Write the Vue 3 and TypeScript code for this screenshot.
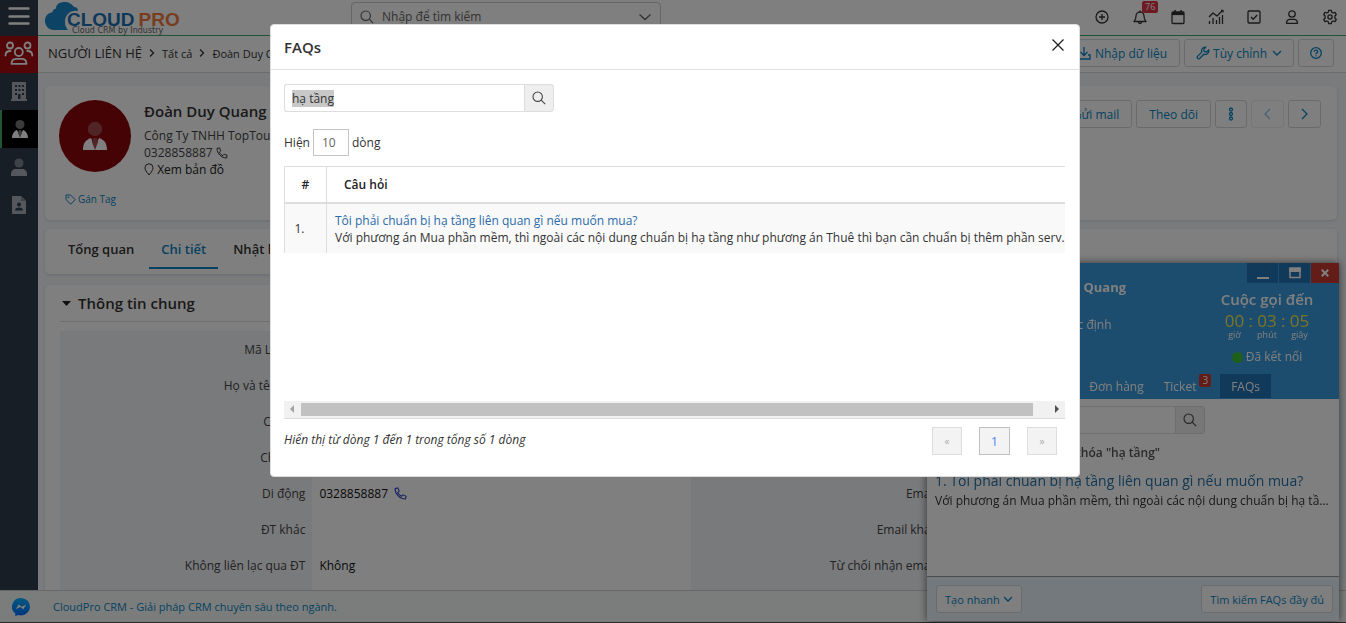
<script setup lang="ts">
import { onMounted, ref } from 'vue'

interface FieldRow {
  left: string
  value: string
  phone?: boolean
  right: string
}

const keyword = ref('hạ tầng')
const keywordInput = ref<HTMLInputElement | null>(null)
const pageSize = ref('10')
const callKeyword = ref('hạ tầng')
const globalSearch = ref('')

onMounted(() => {
  keywordInput.value?.focus()
  keywordInput.value?.select()
})

const rows: FieldRow[] = [
  { left: 'Mã Liên hệ', value: '', right: 'Danh xưng' },
  { left: 'Họ và tên đệm', value: '', right: 'Tên' },
  { left: 'Công ty', value: '', right: 'Phòng ban' },
  { left: 'Chức vụ', value: '', right: 'Điện thoại' },
  { left: 'Di động', value: '0328858887', phone: true, right: 'Email' },
  { left: 'ĐT khác', value: '', right: 'Email khác' },
  { left: 'Không liên lạc qua ĐT', value: 'Không', right: 'Từ chối nhận email' },
  { left: '', value: '', right: '' },
]

const faq = {
  question: 'Tôi phải chuẩn bị hạ tầng liên quan gì nếu muốn mua?',
  answer:
    'Với phương án Mua phần mềm, thì ngoài các nội dung chuẩn bị hạ tầng như phương án Thuê thì bạn cần chuẩn bị thêm phần serv...',
}

const timer = [
  { value: '00', unit: 'giờ' },
  { value: '03', unit: 'phút' },
  { value: '05', unit: 'giây' },
]
</script>

<template>
  <div class="app">
    <header class="topbar">
      <button class="burger" aria-label="Menu">
        <svg width="22" height="18" viewBox="0 0 22 18"><path d="M1.5 1.5h19M1.5 9.5h19M1.5 16.5h19" stroke="#fff" stroke-width="2.4" stroke-linecap="round" /></svg>
      </button>
      <a href="#" class="logo" aria-label="CloudPro">
        <svg width="138" height="34" viewBox="0 0 138 34">
          <path d="M9 29C3 29 0 24 0 20c0-5 3-8 7-8.500C8 9 9 8 11 7.500 11 3 15 1 20 1c4 0 7 2 9 5 3 0 4 2 4 4-8-1-13 4-13 11 0 3 1 6 3 8z" fill="#1a86c8" />
          <text x="27" y="32" class="logo-sub">Cloud CRM by Industry</text>
          <text x="22" y="25" class="logo-text" fill="#1d70b4">CLOUD<tspan fill="#f07a3c" dx="4">PRO</tspan></text>
        </svg>
      </a>
      <label class="global-search">
        <svg width="14" height="14" viewBox="0 0 14 14" fill="none" stroke="#666" stroke-width="1.200"><circle cx="5.700" cy="5.700" r="4.700" /><path d="M9.200 9.200l4 4" /></svg>
        <input v-model="globalSearch" placeholder="Nhập để tìm kiếm" aria-label="Nhập để tìm kiếm" />
        <svg width="14" height="8" viewBox="0 0 14 8" fill="none" stroke="#666" stroke-width="1.300"><path d="M1.500 1.500L7 6.500l5.500-5" /></svg>
      </label>
      <nav class="top-icons">
        <button aria-label="Tạo mới"><svg viewBox="0 0 16 16"><circle cx="8" cy="8" r="6" /><path d="M8 5v6M5 8h6" /></svg></button>
        <button aria-label="Thông báo">
          <svg viewBox="0 0 16 16"><path d="M2 12.500c1.500-1.500 2-3 2-5.500a4 4 0 0 1 8 0c0 2.500.500 4 2 5.500zM8 1.500V3M6.500 13a1.500 1.500 0 0 0 3 0" /></svg>
          <span class="badge">76</span>
        </button>
        <button aria-label="Lịch"><svg viewBox="0 0 16 16"><rect x="2" y="3" width="12" height="11.500" rx="1" /><path d="M2 4.500h12" stroke-width="3.200" /><path d="M5 1v3M11 1v3" stroke-width="1.600" /></svg></button>
        <button aria-label="Báo cáo"><svg viewBox="0 0 16 16"><path d="M1 8l4-4 4 3 5-5M1.500 12v3M5 9v6M8.500 11v4M11.500 8v7M14.500 6v9" /><path d="M13 1.500h2v2" /></svg></button>
        <button aria-label="Công việc"><svg viewBox="0 0 16 16"><rect x="2" y="2" width="12" height="12" rx="1" /><path d="M5 8l2.200 2.200L11.200 6" /></svg></button>
        <button aria-label="Tài khoản"><svg viewBox="0 0 16 16"><circle cx="8" cy="5" r="3.200" /><path d="M2.500 14.300c0-2.500 1.500-4 3.500-4h4c2 0 3.500 1.500 3.500 4z" /></svg></button>
        <button aria-label="Cài đặt"><svg viewBox="0 0 16 16"><path d="M6.700 1.300h2.600l.400 1.900 1.500.800 1.800-.700 1.300 2.300-1.400 1.300v2.200l1.400 1.300-1.300 2.300-1.800-.700-1.500.800-.400 1.900H6.700l-.400-1.900-1.500-.800-1.800.700-1.300-2.300 1.400-1.300V6.900L1.700 5.600 3 3.300l1.800.700 1.500-.800z" /><circle cx="8" cy="8" r="2.100" /></svg></button>
      </nav>
    </header>

    <div class="shell">
      <aside class="sidebar">
        <a href="#" class="side side-red" aria-label="Khách hàng">
          <svg width="30" height="26" viewBox="0 0 30 26" fill="none" stroke="#fff" stroke-width="1.800"><circle cx="6" cy="4.500" r="3" /><circle cx="23.500" cy="4.500" r="3" /><circle cx="14.800" cy="11" r="4" /><path d="M7.500 22.800c0-3 2-5 5-5h5c3 0 5 2 5 5zM1.500 14.500c0-3 1.500-4.500 5-4.500M28.300 14.500c0-3-1.500-4.500-5-4.500" stroke-linecap="round" stroke-linejoin="round" /></svg>
        </a>
        <a href="#" class="side" aria-label="Công ty">
          <svg width="18" height="20" viewBox="0 0 18 20"><path d="M2 0h14v17h1v2H1v-2h1z" fill="#a9b1b9" /><path d="M5 3h2v2H5zM8.500 3h2v2h-2zM12 3h2v2h-2zM5 7h2v2H5zM8.500 7h2v2h-2zM12 7h2v2h-2zM5 11h2v2H5zM12 11h2v2h-2zM8 12h2.500v5H8z" fill="#2e3d4d" /></svg>
        </a>
        <a href="#" class="side side-active" aria-label="Người liên hệ">
          <svg width="18" height="20" viewBox="0 0 18 20"><circle cx="9" cy="5.500" r="4.500" fill="#777" /><path d="M1 19c0-4 2-7 5-8l3 6 3-6c3 1 5 4 5 8z" fill="#fff" /><path d="M8 11h2l1 3-2 5-2-5z" fill="#777" /></svg>
        </a>
        <a href="#" class="side" aria-label="Cá nhân">
          <svg width="18" height="20" viewBox="0 0 18 20"><circle cx="9" cy="6" r="4.500" fill="#7e8790" /><path d="M1 19v-2c0-3 2-5 5-5h6c3 0 5 2 5 5v2z" fill="#a9b1b9" /></svg>
        </a>
        <a href="#" class="side" aria-label="Hồ sơ">
          <svg width="16" height="20" viewBox="0 0 16 20"><path d="M1 1h9l5 5v13H1z" fill="#a9b1b9" /><path d="M10 1l5 5h-5z" fill="#7e8790" /><circle cx="8" cy="9.500" r="2" fill="#2e3d4d" /><path d="M4 15.500c0-2 1.500-3 4-3s4 1 4 3z" fill="#2e3d4d" /></svg>
        </a>
      </aside>

      <div class="main">
        <div class="crumbs">
          <nav class="trail">
            <strong>NGƯỜI LIÊN HỆ</strong>
            <svg width="6" height="10" viewBox="0 0 6 10"><path d="M1 1.500L4.500 5 1 8.500" /></svg>
            <a href="#">Tất cả</a>
            <svg width="6" height="10" viewBox="0 0 6 10"><path d="M1 1.500L4.500 5 1 8.500" /></svg>
            <a href="#">Đoàn Duy Quang</a>
          </nav>
          <div class="actions">
            <button class="btn">
              <svg width="14" height="14" viewBox="0 0 14 14"><path d="M7 1v8M3.500 6L7 9.500 10.500 6M3 9H1v4h12V9h-2" /></svg>
              Nhập dữ liệu
            </button>
            <button class="btn btn-tight">
              <svg width="14" height="14" viewBox="0 0 14 14"><path d="M9.500 1.200a3.600 3.600 0 0 0-3.700 4.900L1.500 10.400a1.500 1.500 0 0 0 2.100 2.100l4.300-4.300a3.600 3.600 0 0 0 4.800-4.300L10.500 6 8.200 5.500 7.800 3.400z" /></svg>
              Tùy chỉnh
              <svg class="chev" width="10" height="6" viewBox="0 0 10 6"><path d="M1 1l4 4 4-4" /></svg>
            </button>
            <button class="btn btn-tight" aria-label="Trợ giúp">
              <svg width="12" height="12" viewBox="0 0 12 12"><circle cx="6" cy="6" r="5.300" /><path d="M4.300 4.700c0-2.300 3.500-2.100 3.500 0C7.800 6 6 5.800 6 7.200M6 8.200v1.300" /></svg>
            </button>
          </div>
        </div>

        <div class="content">
          <section class="card profile">
            <div class="avatar">
              <svg width="26" height="30" viewBox="0 0 26 30"><circle cx="13" cy="8" r="7.200" fill="#a24a4c" /><path d="M1 29c0-6 2-10 8-12l4 10 4-10c6 2 8 6 8 12z" fill="#fff" /><path d="M11 17h4l1 4-3 8-3-8z" fill="#a24a4c" /></svg>
            </div>
            <div class="who">
              <h1>Đoàn Duy Quang</h1>
              <p>Công Ty TNHH TopTour</p>
              <p>0328858887 <svg width="12" height="12" viewBox="0 0 12 12"><path d="M1 1.500L3.500.800l1.300 3-1.400 1.300c.800 1.700 1.800 2.700 3.500 3.500l1.300-1.400 3 1.300-.700 2.500C5.500 11 1 6.500 1 1.500z" /></svg></p>
              <p class="map"><svg width="10" height="13" viewBox="0 0 10 13"><path d="M5 12C2.500 8.800 1 7 1 4.800a4 4 0 0 1 8 0C9 7 7.500 8.800 5 12z" /></svg> <a href="#">Xem bản đồ</a></p>
            </div>
            <div class="actions record-actions">
              <button class="btn">Gửi mail</button>
              <button class="btn">Theo dõi</button>
              <button class="btn" aria-label="Thêm"><svg width="6" height="14" viewBox="0 0 6 14"><circle cx="3" cy="2.500" r="1.500" /><circle cx="3" cy="7" r="1.500" /><circle cx="3" cy="11.500" r="1.500" /></svg></button>
              <button class="btn btn-off" disabled aria-label="Trước"><svg width="7" height="12" viewBox="0 0 7 12"><path d="M6 1L1 6l5 5" /></svg></button>
              <button class="btn" aria-label="Sau"><svg width="7" height="12" viewBox="0 0 7 12"><path d="M1 1l5 5-5 5" /></svg></button>
            </div>
            <a href="#" class="tag"><svg width="11" height="11" viewBox="0 0 11 11"><path d="M1 1h4.500l4.700 4.700-4.500 4.500L1 5.500z" /><circle cx="3.300" cy="3.300" r=".5" /></svg>Gán Tag</a>
          </section>

          <nav class="card tabs">
            <a href="#">Tổng quan</a>
            <a href="#" class="on">Chi tiết</a>
            <a href="#">Nhật ký</a>
          </nav>

          <section class="card info">
            <h2><svg width="9" height="5" viewBox="0 0 9 5"><path d="M0 0h9L4.500 5z" fill="#222" /></svg>Thông tin chung</h2>
            <div class="fields">
              <template v-for="row in rows" :key="row.left">
                <div class="label">{{ row.left }}</div>
                <div class="value">
                  {{ row.value }}
                  <svg v-if="row.phone" width="13" height="13" viewBox="0 0 12 12"><path d="M1 1.500L3.500.800l1.300 3-1.400 1.300c.800 1.700 1.800 2.700 3.500 3.500l1.300-1.400 3 1.300-.700 2.500C5.500 11 1 6.500 1 1.500z" /></svg>
                </div>
                <div class="label">{{ row.right }}</div>
                <div class="value"></div>
              </template>
            </div>
          </section>
        </div>
      </div>
    </div>

    <footer class="footer">
      <svg width="18" height="18" viewBox="0 0 18 18"><defs><linearGradient id="msg" x1="0" y1="0" x2="0" y2="1"><stop offset="0" stop-color="#00b2ff" /><stop offset="1" stop-color="#006aff" /></linearGradient></defs><path d="M9 0a9 8.700 0 0 1 0 17.400c-1 0-1.900-.100-2.700-.400L3.300 18v-2.500A8.700 8.700 0 0 1 9 0z" fill="url(#msg)" /><path d="M3.600 11.200l3.200-4.600 2.900 2.200 4.700-2.200-3.200 4.600-2.900-2.200z" fill="#fff" /></svg>
      <a href="#">CloudPro CRM - Giải pháp CRM chuyên sâu theo ngành.</a>
    </footer>
  </div>

  <section class="call" aria-label="Cuộc gọi đến">
    <div class="call-head">
      <div class="win">
        <button aria-label="Thu nhỏ"><svg width="12" height="12" viewBox="0 0 12 12"><path d="M0 10h12v2H0z" fill="#fff" /></svg></button>
        <button aria-label="Phóng to"><svg width="12" height="12" viewBox="0 0 12 12"><path d="M1 1h10v9.500H1z" fill="none" stroke="#fff" stroke-width="1.500" /><path d="M0 1h12v4H0z" fill="#fff" /></svg></button>
        <button class="win-close" aria-label="Đóng"><svg width="8" height="8" viewBox="0 0 8 8"><path d="M.7.700l6.600 6.600M7.300.700L.7 7.300" stroke="#fff" stroke-width="2" /></svg></button>
      </div>
      <div class="call-info">
        <div class="caller">
          <b>Đoàn Duy Quang</b>
          <span>0328858887</span>
          <span class="state">Chưa xác định</span>
        </div>
        <div class="call-status">
          <b>Cuộc gọi đến</b>
          <div class="timer">
            <template v-for="(t, i) in timer" :key="t.unit">
              <i v-if="i">:</i>
              <span>{{ t.value }}<small>{{ t.unit }}</small></span>
            </template>
          </div>
          <div class="connected"><span class="dot"></span>Đã kết nối</div>
        </div>
      </div>
      <nav class="call-tabs">
        <a href="#">Cơ hội</a>
        <a href="#">Đơn hàng</a>
        <a href="#">Ticket<sup>3</sup></a>
        <a href="#" class="on">FAQs</a>
      </nav>
    </div>
    <div class="call-body">
      <div class="search">
        <input v-model="callKeyword" aria-label="Từ khóa" />
        <button aria-label="Tìm"><svg width="14" height="14" viewBox="0 0 14 14"><circle cx="5.700" cy="5.700" r="4.700" /><path d="M9.200 9.200l4 4" /></svg></button>
      </div>
      <p class="hint">Kết quả tìm kiếm với từ khóa "hạ tầng"</p>
      <a href="#" class="result">1. {{ faq.question }}</a>
      <p class="excerpt">{{ faq.answer }}</p>
    </div>
    <div class="call-foot">
      <button class="btn">Tạo nhanh <svg class="chev" width="10" height="6" viewBox="0 0 10 6"><path d="M1 1l4 4 4-4" /></svg></button>
      <button class="btn">Tìm kiếm FAQs đầy đủ</button>
    </div>
  </section>

  <div class="overlay">
    <section class="modal" role="dialog" aria-labelledby="faq-title">
      <header>
        <h2 id="faq-title">FAQs</h2>
        <button aria-label="Đóng"><svg width="12" height="12" viewBox="0 0 12 12"><path d="M.5.500l11 11M11.500.500l-11 11" stroke="#222" stroke-width="1.300" /></svg></button>
      </header>
      <div class="modal-body">
        <div class="search">
          <input ref="keywordInput" v-model="keyword" class="kw" aria-label="Từ khóa tìm kiếm" />
          <button aria-label="Tìm kiếm"><svg width="14" height="14" viewBox="0 0 14 14"><circle cx="5.700" cy="5.700" r="4.700" /><path d="M9.200 9.200l4 4" /></svg></button>
        </div>
        <label class="size">Hiện
          <select v-model="pageSize"><option>10</option><option>20</option><option>50</option></select>
          dòng</label>
        <div class="scroll">
          <table>
            <thead><tr><th class="num">#</th><th>Câu hỏi</th></tr></thead>
            <tbody>
              <tr>
                <td class="num">1.</td>
                <td><a href="#">{{ faq.question }}</a><div>{{ faq.answer }}</div></td>
              </tr>
            </tbody>
          </table>
        </div>
        <div class="hbar">
          <svg width="17" height="16" viewBox="0 0 17 16"><path d="M10 4v8L6 8z" fill="#a3a3a3" /></svg>
          <div class="track"><div class="thumb"></div></div>
          <svg width="17" height="16" viewBox="0 0 17 16"><path d="M7 4v8l4-4z" fill="#505050" /></svg>
        </div>
        <div class="pager">
          <em>Hiển thị từ dòng 1 đến 1 trong tổng số 1 dòng</em>
          <div class="pages">
            <button disabled>«</button>
            <button class="cur">1</button>
            <button disabled>»</button>
          </div>
        </div>
      </div>
    </section>
  </div>
</template>

<style>
html, body { height: 100%; overflow: hidden; }
</style>

<style scoped>
.app, .call, .overlay, button, input, select {
  font-family: "Open Sans", "Noto Sans", sans-serif;
  font-size: 12px;
  color: #333;
}
* { box-sizing: border-box; }
a { text-decoration: none; color: inherit; }
p, h1, h2 { margin: 0; }
button { padding: 0; border: 0; background: none; display: inline-flex; align-items: center; justify-content: center; }
svg { flex: none; fill: none; }

.app { display: flex; flex-direction: column; height: 100vh; background: #f3f6fb; }
.topbar { display: flex; align-items: center; height: 36px; background: #fff; border-bottom: 1px solid #3fae6d; padding-bottom: 2px; }
.burger { align-self: flex-start; width: 38px; height: 36px; background: #2e3d4d; padding-bottom: 4px; }
.logo { width: 313px; padding-left: 7px; height: 32px; }
.logo svg { display: block; }
.logo-text { font: bold 19px "Liberation Sans", sans-serif; }
.logo-sub { font: 8px "DejaVu Sans", sans-serif; fill: #666; }
.global-search { display: flex; align-items: center; gap: 8px; width: 310px; height: 30px; padding: 0 8px; border: 1px solid #ccc; border-radius: 4px; }
.global-search input { flex: 1; min-width: 0; border: 0; outline: 0; padding: 0; background: none; }
.global-search input::placeholder { color: #666; opacity: 1; }
.top-icons { margin-left: auto; display: flex; gap: 22px; padding-right: 8px; }
.top-icons button { position: relative; width: 16px; height: 16px; }
.top-icons svg { width: 16px; height: 16px; stroke: #333; stroke-width: 1.3; stroke-linejoin: round; }
.badge { position: absolute; left: 10px; top: -8px; padding: 0 3px; border-radius: 2px; background: #dc3545; color: #fff; font-size: 9px; line-height: 12px; }

.shell { flex: 1; display: flex; min-height: 0; }
.sidebar { width: 38px; flex: none; background: #2e3d4d; display: flex; flex-direction: column; }
.side { display: flex; align-items: center; justify-content: center; height: 38px; }
.side:nth-child(-n + 2) { height: 37px; }
.side-red { background: #a80a10; padding-bottom: 2px; }
.side-active { background: #000; border-left: 2px solid #3fae6d; }
.main { flex: 1; min-width: 0; display: flex; flex-direction: column; }
.crumbs { display: flex; align-items: center; justify-content: space-between; height: 37px; flex: none; background: #fff; border-bottom: 1px solid #d4d6da; padding: 0 12px 2px 10px; }
.trail { display: flex; align-items: center; gap: 7px; }
.trail strong { font-size: 13px; font-weight: 400; }
.trail a { font-size: 11px; }
.trail svg { stroke: #333; stroke-width: 1.3; }
.actions { display: flex; gap: 4px; }
.btn { height: 28px; padding: 0 12px; gap: 4px; border: 1px solid #d3d6da; border-radius: 3px; background: #fff; color: #0a84c1; white-space: nowrap; }
.btn svg { stroke: #0a84c1; stroke-width: 1.3; }
.btn-tight { padding: 0 11px; gap: 3px; }
.btn .chev { margin-left: 2px; }
.btn-off { opacity: .45; }

.content { flex: 1; min-height: 0; overflow: hidden; padding: 13px 9px 0 7px; display: flex; flex-direction: column; gap: 9px; }
.card { flex: none; background: #fff; border-radius: 5px; box-shadow: 0 1px 3px rgba(60, 80, 110, .18); }
.profile { display: grid; grid-template-columns: 72px 1fr auto; column-gap: 13px; padding: 14px 16px 13px 14px; min-height: 134px; align-content: space-between; }
.avatar { width: 72px; height: 72px; border-radius: 50%; background: #8c070b; display: flex; align-items: center; justify-content: center; }
.who { line-height: 17px; color: #444; }
.who h1 { font-size: 15px; line-height: 22px; font-weight: 600; color: #333; margin-bottom: 5px; }
.who svg { stroke: #333; vertical-align: -2px; }
.who .map { color: #222; }
.record-actions { align-self: start; }
.tag { grid-column: 1 / -1; display: flex; align-items: center; gap: 2px; padding-left: 6px; font-size: 10px; line-height: 16px; color: #0a84c1; }
.tag svg { stroke: #0a84c1; }
.tabs { display: flex; gap: 3px; padding: 0 11px; height: 45px; }
.tabs a { margin-bottom: 5px; padding: 2px 12px 0; display: flex; align-items: center; border-bottom: 2px solid transparent; font-size: 13px; font-weight: 600; }
.tabs .on { color: #0a84c1; border-color: #0a84c1; }
.info { padding: 0 15px; margin-top: 2px; }
.info h2 { display: flex; align-items: center; gap: 7px; height: 37px; padding-left: 2px; font-size: 15px; font-weight: 600; border-bottom: 1px solid #d9dce0; }
.fields { display: grid; grid-template-columns: 20fr 30fr 20fr 30fr; margin-top: 9px; }
.label, .value { height: 36px; line-height: 38px; padding: 0 7px; white-space: nowrap; }
.label { text-align: right; background: #f3f5f9; color: #444; }
.value { color: #111; }
.value svg { stroke: #3949c0; vertical-align: -2px; margin-left: 3px; }

.footer { display: flex; align-items: center; gap: 23px; height: 33px; flex: none; padding-left: 12px; background: #f7fbfa; border-top: 1px solid #ccd0d2; border-bottom: 1px solid #555; color: #0a84c1; font-size: 11px; }

.call { position: fixed; right: 7px; bottom: 2px; width: 412px; height: 358px; display: flex; flex-direction: column; background: #fff; box-shadow: 0 0 8px rgba(0, 0, 0, .6); }
.call-head { height: 136px; flex: none; background: #3a9bdc; color: #fff; display: flex; flex-direction: column; }
.win { display: flex; justify-content: flex-end; gap: 1px; height: 20px; flex: none; }
.win button { width: 31px; background: #2272b3; }
.win .win-close { width: 28px; background: #c7392f; }
.call-info { display: flex; justify-content: space-between; flex: 1; padding-right: 18px; }
.caller { width: 182px; margin-left: 83px; margin-top: -5px; line-height: 18px; white-space: nowrap; }
.caller b, .caller span { display: block; }
.caller b { font-size: 13px; padding-left: 7px; }
.caller .state { padding-left: 22px; margin-top: 2px; }
.call-status { width: 108px; text-align: center; }
.call-status > b { display: block; font-size: 15px; line-height: 32px; font-weight: 600; white-space: nowrap; }
.timer { display: flex; justify-content: center; gap: 3px; margin-top: -4px; font-size: 17px; line-height: 20px; color: #f2e84c; }
.timer i { font-style: normal; }
.timer small { display: block; font-size: 9px; line-height: 8px; color: #fff; }
.timer span { width: 22px; }
.connected { display: flex; align-items: center; justify-content: center; gap: 3px; margin-top: 10px; line-height: 16px; }
.dot { width: 11px; height: 11px; border-radius: 50%; background: #3cbf36; }
.call-tabs { display: flex; justify-content: flex-end; padding-right: 68px; height: 25px; flex: none; }
.call-tabs a { padding: 0 9px 0 11px; height: 24px; line-height: 26px; }
.call-tabs .on { background: #2272b3; padding: 0 11px; }
.call-tabs sup { background: #c7392f; border-radius: 2px; padding: 0 3px; font-size: 10px; line-height: 13px; display: inline-block; margin-left: 3px; vertical-align: 7px; }
.call-body { flex: 1; min-height: 0; padding: 7px 8px 0; }
.search { display: flex; width: 270px; height: 28px; }
.search input { flex: 1; min-width: 0; height: 28px; padding: 0 7px; border: 1px solid #ddd; border-right: 0; border-radius: 3px 0 0 3px; background: none; outline: 0; }
.search .kw::selection { background: #c8c8c8; color: #333; }
.search button { width: 30px; background: #eee; border: 1px solid #ddd; border-radius: 0 3px 3px 0; }
.search svg { stroke: #444; stroke-width: 1.1; }
.hint { margin-top: 10px; line-height: 18px; font-weight: 600; color: #555; }
.result { display: block; margin-top: 9px; font-size: 14px; line-height: 20px; color: #2471a8; white-space: nowrap; }
.excerpt { line-height: 20px; overflow: hidden; white-space: nowrap; text-overflow: ellipsis; }
.call-foot { flex: none; height: 45px; display: flex; align-items: center; justify-content: space-between; padding: 0 6px 0 9px; border-top: 1px solid #999; background: #e6f2f8; }
.call-foot .btn { padding: 0 8px; font-size: 11px; }
.call-foot .chev { margin-left: -1px; }

.overlay { position: fixed; inset: 0; background: rgba(0, 0, 0, .5); display: flex; justify-content: center; align-items: flex-start; padding: 24px 0 0 4px; }
.modal { width: 810px; background: #fff; border: 1px solid #ddd; border-radius: 4px; }
.modal > header { display: flex; align-items: center; justify-content: space-between; height: 45px; padding: 0 15px 0 13px; border-bottom: 1px solid #e0e0e0; }
.modal h2 { font-size: 15px; font-weight: 600; }
.modal > header button { margin-bottom: 5px; }
.modal-body { padding: 14px 14px 21px 13px; }
.size { display: flex; align-items: center; gap: 3px; margin-top: 17px; }
.size select { appearance: none; width: 36px; height: 27px; padding: 0 8px; border: 1px solid #c4c4c4; border-radius: 0; background: #fff; color: #666; }
.scroll { height: 235px; margin-top: 10px; overflow: hidden; }
table { width: 833px; border-collapse: separate; border-spacing: 0; border-left: 1px solid #ddd; table-layout: fixed; }
th { height: 38px; padding: 0 17px; border-top: 1px solid #ddd; border-bottom: 2px solid #ddd; text-align: left; font-weight: 600; color: #222; }
td { height: 49px; padding: 0 8px; background: #f9f9f9; line-height: 17px; white-space: nowrap; }
td a { color: #2a6ba8; }
.num { width: 42px; border-right: 1px solid #ddd; text-align: center; padding: 0; }
td.num { padding-right: 12px; }
.hbar { display: flex; height: 18px; background: #f1f1f1; border-bottom: 1px solid #ddd; }
.track { flex: 1; padding: 2px 0; }
.thumb { width: 98%; height: 13px; background: #c1c1c1; }
.pager { display: flex; justify-content: space-between; margin-top: 8px; padding-right: 8px; }
.pager em { line-height: 26px; }
.pages { display: flex; gap: 17px; }
.pages button { width: 30px; height: 28px; border: 1px solid #ddd; background: #f3f3f3; color: #aaa; }
.pages button:disabled { font-size: 10px; }
.pages .cur { width: 31px; border-color: #c0c0c0; color: #4285f4; }
</style>
